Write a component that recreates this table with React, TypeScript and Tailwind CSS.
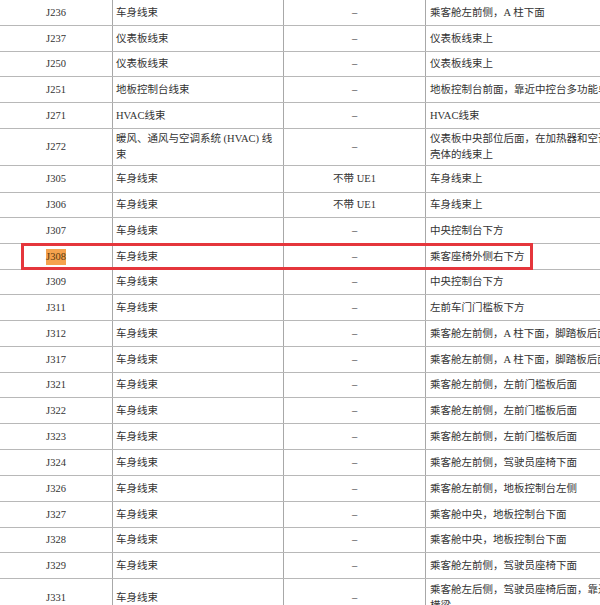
type Row = {
  id: string
  part: string[]
  note: string
  place: string[]
  h: string
  mark?: boolean
}

const rows: Row[] = [
  { id: 'J236', part: ['车身线束'], note: '–', place: ['乘客舱左前侧，A 柱下面'], h: 'h-[26px]' },
  { id: 'J237', part: ['仪表板线束'], note: '–', place: ['仪表板线束上'], h: 'h-[26px]' },
  { id: 'J250', part: ['仪表板线束'], note: '–', place: ['仪表板线束上'], h: 'h-[25px]' },
  { id: 'J251', part: ['地板控制台线束'], note: '–', place: ['地板控制台前面，靠近中控台多功能单元'], h: 'h-[26px]' },
  { id: 'J271', part: ['HVAC线束'], note: '–', place: ['HVAC线束'], h: 'h-[26px]' },
  { id: 'J272', part: ['暖风、通风与空调系统 (HVAC) 线', '束'], note: '–', place: ['仪表板中央部位后面，在加热器和空调', '壳体的线束上'], h: 'h-[37px]' },
  { id: 'J305', part: ['车身线束'], note: '不带 UE1', place: ['车身线束上'], h: 'h-[27px]' },
  { id: 'J306', part: ['车身线束'], note: '不带 UE1', place: ['车身线束上'], h: 'h-[25px]' },
  { id: 'J307', part: ['车身线束'], note: '–', place: ['中央控制台下方'], h: 'h-[26px]' },
  { id: 'J308', part: ['车身线束'], note: '–', place: ['乘客座椅外侧右下方'], h: 'h-[26px]', mark: true },
  { id: 'J309', part: ['车身线束'], note: '–', place: ['中央控制台下方'], h: 'h-[25px]' },
  { id: 'J311', part: ['车身线束'], note: '–', place: ['左前车门门槛板下方'], h: 'h-[26px]' },
  { id: 'J312', part: ['车身线束'], note: '–', place: ['乘客舱左前侧，A 柱下面，脚踏板后面'], h: 'h-[26px]' },
  { id: 'J317', part: ['车身线束'], note: '–', place: ['乘客舱左前侧，A 柱下面，脚踏板后面'], h: 'h-[26px]' },
  { id: 'J321', part: ['车身线束'], note: '–', place: ['乘客舱左前侧，左前门槛板后面'], h: 'h-[25px]' },
  { id: 'J322', part: ['车身线束'], note: '–', place: ['乘客舱左前侧，左前门槛板后面'], h: 'h-[26px]' },
  { id: 'J323', part: ['车身线束'], note: '–', place: ['乘客舱左前侧，左前门槛板后面'], h: 'h-[26px]' },
  { id: 'J324', part: ['车身线束'], note: '–', place: ['乘客舱左前侧，驾驶员座椅下面'], h: 'h-[26px]' },
  { id: 'J326', part: ['车身线束'], note: '–', place: ['乘客舱左前侧，地板控制台左侧'], h: 'h-[26px]' },
  { id: 'J327', part: ['车身线束'], note: '–', place: ['乘客舱中央，地板控制台下面'], h: 'h-[26px]' },
  { id: 'J328', part: ['车身线束'], note: '–', place: ['乘客舱中央，地板控制台下面'], h: 'h-[25px]' },
  { id: 'J329', part: ['车身线束'], note: '–', place: ['乘客舱左前侧，驾驶员座椅下面'], h: 'h-[26px]' },
  { id: 'J331', part: ['车身线束'], note: '–', place: ['乘客舱左后侧，驾驶员座椅后面，靠近', '横梁'], h: 'h-[38px]' },
]

export default function App() {
  return (
    <div
      className="w-[600px] h-[605px] overflow-hidden bg-white text-[#333] text-[10.5px] leading-[16px]"
      style={{ fontFamily: '"Liberation Serif", "Noto Sans CJK SC", serif' }}
    >
      <div className="w-[800px]">
        {rows.map((r) => (
          <div key={r.id} className={`relative flex border-b border-[#b8b8b8] ${r.h}`}>
            {/* Part number */}
            <div className="w-[113px] shrink-0 flex items-center justify-center border-r border-[#a8a8a8]">
              {r.mark ? <span className="bg-[#f5a24e] text-[#5a3a10]">{r.id}</span> : r.id}
            </div>

            {/* Harness */}
            <div className="w-[171px] shrink-0 flex flex-col justify-center pl-[3px] border-r border-[#a8a8a8]">
              {r.part.map((t) => (
                <div key={t} className="whitespace-nowrap">{t}</div>
              ))}
            </div>

            {/* Condition */}
            <div className="w-[142px] shrink-0 flex items-center justify-center border-r border-[#a8a8a8]">
              {r.note}
            </div>

            {/* Location */}
            <div className="flex-1 flex flex-col justify-center pl-[4px]">
              {r.place.map((t) => (
                <div key={t} className="whitespace-nowrap">{t}</div>
              ))}
            </div>

            {r.mark && (
              <div className="absolute left-[21px] top-[-1px] w-[512px] h-[27px] border-[3px] border-[#e5363c] pointer-events-none" />
            )}
          </div>
        ))}
      </div>
    </div>
  )
}
